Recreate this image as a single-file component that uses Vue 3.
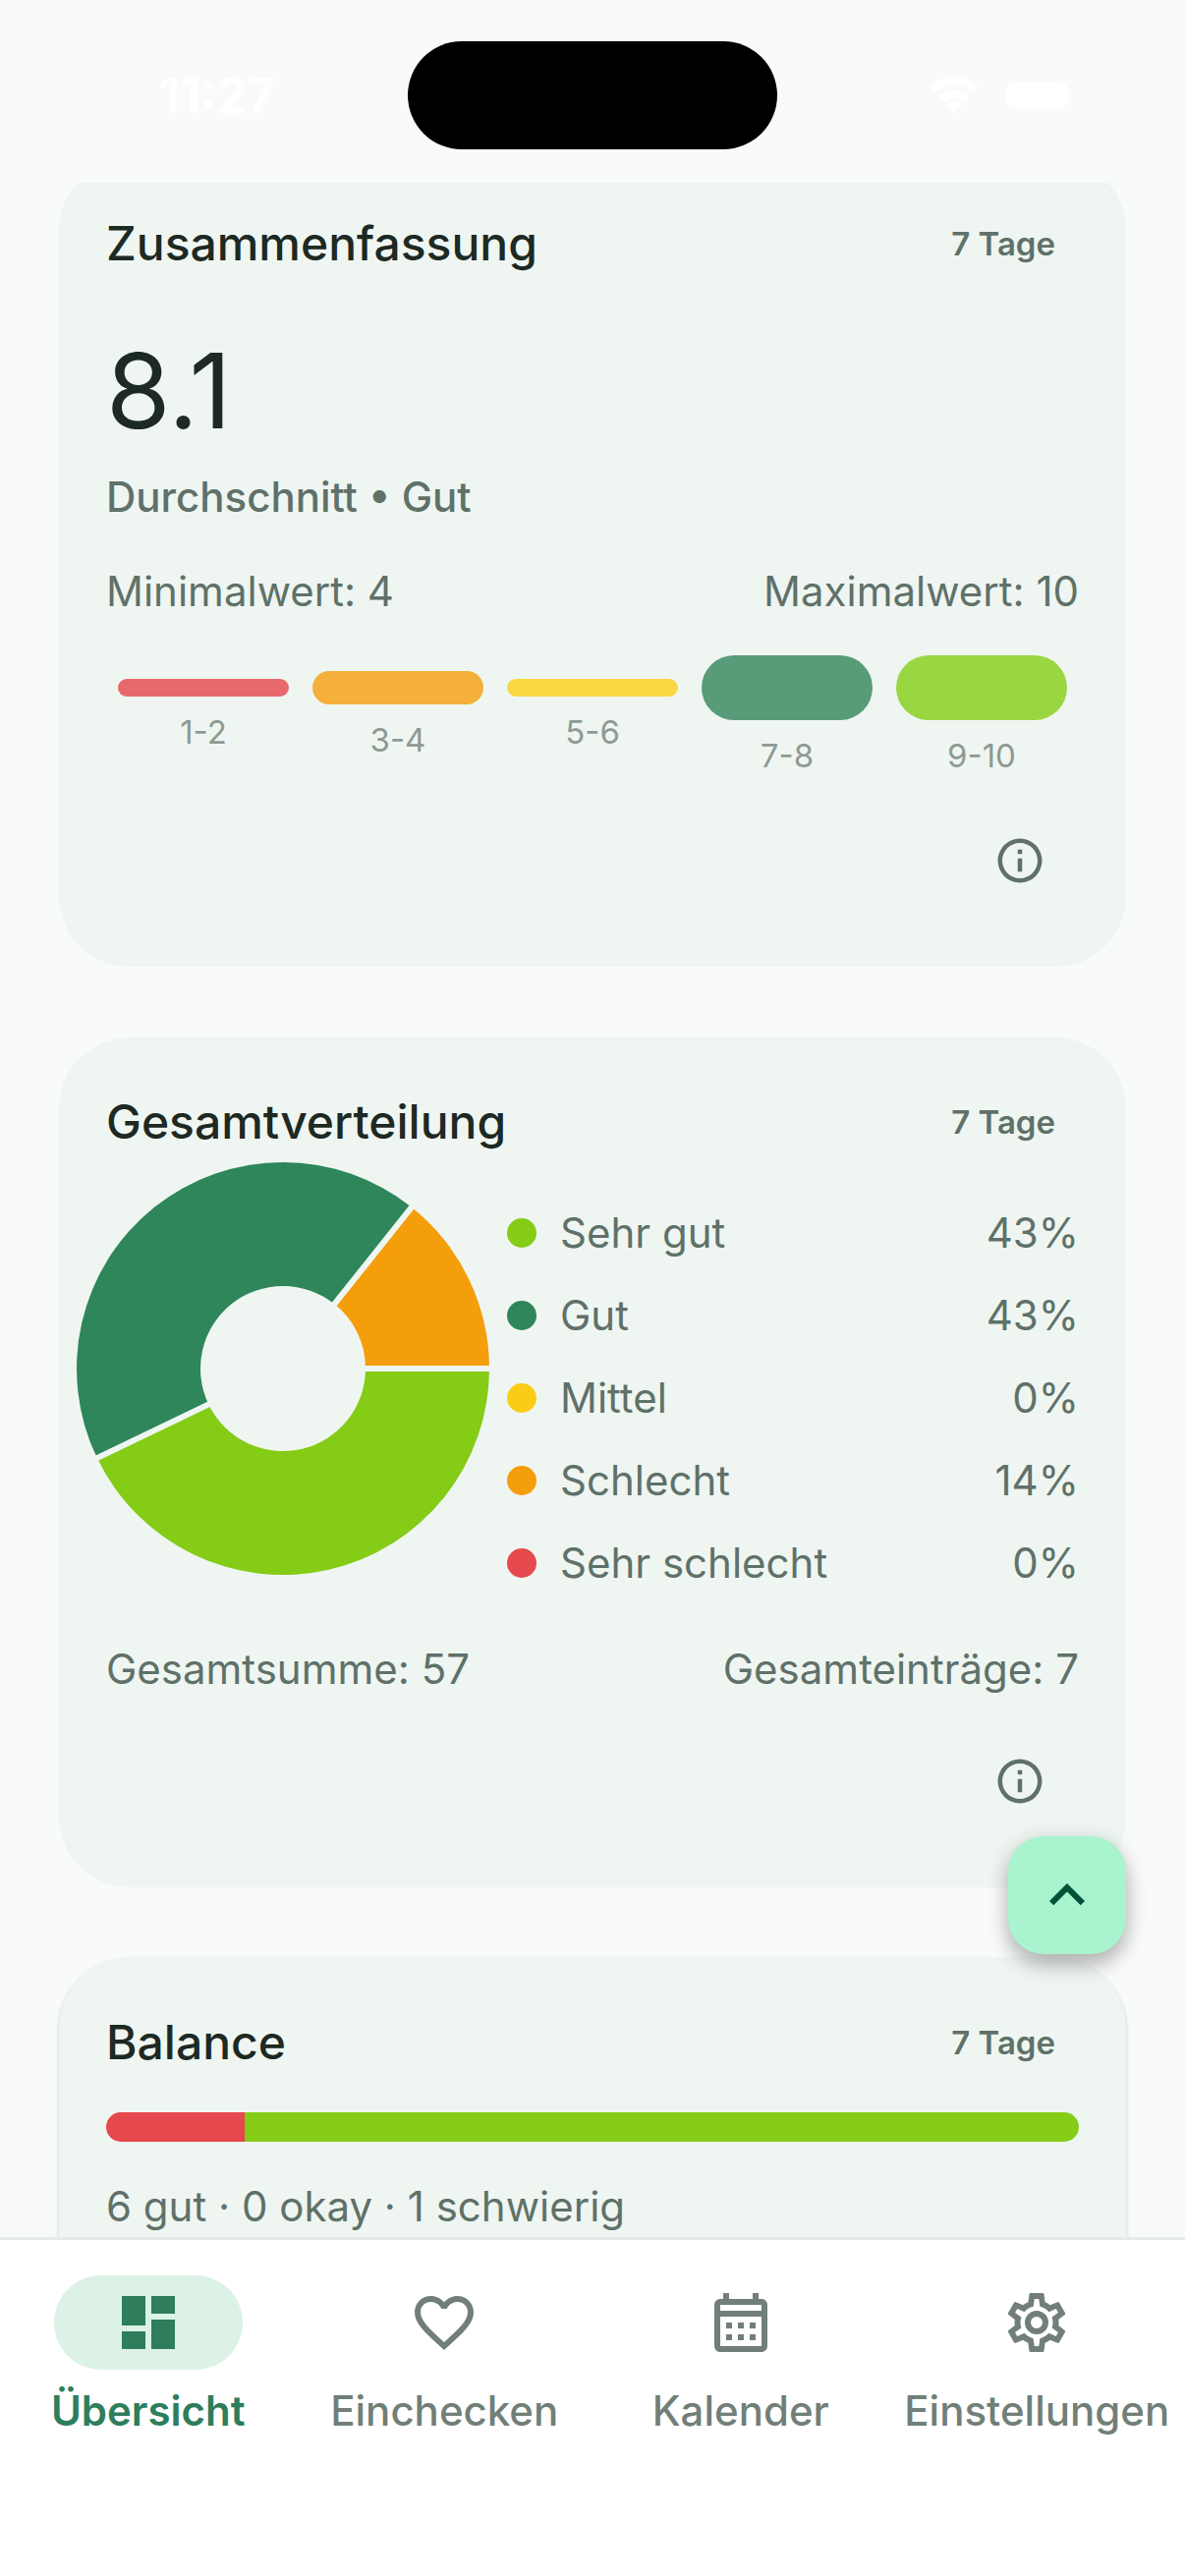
<script setup>
const RANGE_MAX = 66

const ranges = [
  { label: '1-2', height: 18, color: '#e8696c' },
  { label: '3-4', height: 34, color: '#f4b03a' },
  { label: '5-6', height: 18, color: '#fad643' },
  { label: '7-8', height: 66, color: '#579b79' },
  { label: '9-10', height: 66, color: '#9ad642' },
]

const moods = [
  { label: 'Sehr gut', count: 3, percent: '43%', color: '#84cc16' },
  { label: 'Gut', count: 3, percent: '43%', color: '#2e865a' },
  { label: 'Mittel', count: 0, percent: '0%', color: '#facc15' },
  { label: 'Schlecht', count: 1, percent: '14%', color: '#f59e0b' },
  { label: 'Sehr schlecht', count: 0, percent: '0%', color: '#e5484d' },
]

const OUTER = 210
const INNER = 84

function point(radius, angle) {
  return `${(radius * Math.cos(angle)).toFixed(2)} ${(radius * Math.sin(angle)).toFixed(2)}`
}

const total = moods.reduce((sum, mood) => sum + mood.count, 0)
let cursor = 0
const slices = moods
  .filter((mood) => mood.count > 0)
  .map((mood) => {
    const start = cursor
    const end = start + (mood.count / total) * Math.PI * 2
    cursor = end
    const large = end - start > Math.PI ? 1 : 0
    return {
      color: mood.color,
      path:
        `M${point(OUTER, start)} A${OUTER} ${OUTER} 0 ${large} 1 ${point(OUTER, end)} ` +
        `L${point(INNER, end)} A${INNER} ${INNER} 0 ${large} 0 ${point(INNER, start)} Z`,
      edge: `M${point(INNER - 3, start)} L${point(OUTER + 3, start)}`,
    }
  })

const balance = [
  { color: '#e5484d', share: 1 },
  { color: '#84cc16', share: 6 },
]

const infoIcon =
  'M11,9H13V7H11M12,20C7.59,20 4,16.41 4,12C4,7.59 7.59,4 12,4C16.41,4 20,7.59 20,12C20,16.41 16.41,20 12,20M12,2A10,10 0 0,0 2,12A10,10 0 0,0 12,22A10,10 0 0,0 22,12A10,10 0 0,0 12,2M11,17H13V11H11V17Z'

const tabs = [
  {
    label: 'Übersicht',
    active: true,
    icon: 'M13,3V9H21V3M13,21H21V11H13M3,21H11V15H3M3,13H11V3H3V13Z',
  },
  {
    label: 'Einchecken',
    icon: 'M12.1,18.55L12,18.65L11.89,18.55C7.14,14.24 4,11.39 4,8.5C4,6.5 5.5,5 7.5,5C9.04,5 10.54,6 11.07,7.36H12.93C13.46,6 14.96,5 16.5,5C18.5,5 20,6.5 20,8.5C20,11.39 16.86,14.24 12.1,18.55M16.5,3C14.76,3 13.09,3.81 12,5.08C10.91,3.81 9.24,3 7.5,3C4.42,3 2,5.41 2,8.5C2,12.27 5.4,15.36 10.55,20.03L12,21.35L13.45,20.03C18.6,15.36 22,12.27 22,8.5C22,5.41 19.58,3 16.5,3Z',
  },
  {
    label: 'Kalender',
    icon: 'M7 12H9V14H7V12M21 6V20C21 21.11 20.11 22 19 22H5C3.89 22 3 21.1 3 20V6C3 4.9 3.9 4 5 4H6V2H8V4H16V2H18V4H19C20.11 4 21 4.9 21 6M5 8H19V6H5V8M19 20V10H5V20H19M15 14V12H17V14H15M11 14V12H13V14H11M7 16H9V18H7V16M15 18V16H17V18H15M11 18V16H13V18H11Z',
  },
  {
    label: 'Einstellungen',
    icon: 'M12,8A4,4 0 0,1 16,12A4,4 0 0,1 12,16A4,4 0 0,1 8,12A4,4 0 0,1 12,8M12,10A2,2 0 0,0 10,12A2,2 0 0,0 12,14A2,2 0 0,0 14,12A2,2 0 0,0 12,10M10,22C9.75,22 9.54,21.82 9.5,21.58L9.13,18.93C8.5,18.68 7.96,18.34 7.44,17.94L4.95,18.95C4.73,19.03 4.46,18.95 4.34,18.73L2.34,15.27C2.21,15.05 2.27,14.78 2.46,14.63L4.57,12.97L4.5,12L4.57,11L2.46,9.37C2.27,9.22 2.21,8.95 2.34,8.73L4.34,5.27C4.46,5.05 4.73,4.96 4.95,5.05L7.44,6.05C7.96,5.66 8.5,5.32 9.13,5.07L9.5,2.42C9.54,2.18 9.75,2 10,2H14C14.25,2 14.46,2.18 14.5,2.42L14.87,5.07C15.5,5.32 16.04,5.66 16.56,6.05L19.05,5.05C19.27,4.96 19.54,5.05 19.66,5.27L21.66,8.73C21.79,8.95 21.73,9.22 21.54,9.37L19.43,11L19.5,12L19.43,13L21.54,14.63C21.73,14.78 21.79,15.05 21.66,15.27L19.66,18.73C19.54,18.95 19.27,19.04 19.05,18.95L16.56,17.95C16.04,18.34 15.5,18.68 14.87,18.93L14.5,21.58C14.46,21.82 14.25,22 14,22H10M11.25,4L10.88,6.61C9.68,6.86 8.62,7.5 7.85,8.39L5.44,7.35L4.69,8.65L6.8,10.2C6.4,11.37 6.4,12.64 6.8,13.8L4.68,15.36L5.43,16.66L7.86,15.62C8.63,16.5 9.68,17.14 10.87,17.38L11.24,20H12.76L13.13,17.39C14.32,17.14 15.37,16.5 16.14,15.62L18.57,16.66L19.32,15.36L17.2,13.81C17.6,12.64 17.6,11.37 17.2,10.2L19.31,8.65L18.56,7.35L16.15,8.39C15.38,7.5 14.32,6.86 13.12,6.62L12.75,4H11.25Z',
  },
]
</script>

<template>
  <div class="screen">
    <header class="status">
      <span class="time">11:27</span>
      <span class="island"></span>
      <span class="signals">
        <svg class="wifi" viewBox="0 0 50 38" fill="none" stroke="#fff" stroke-width="8" aria-hidden="true">
          <path d="M3 13A31 31 0 0 1 47 13" />
          <path d="M12 23A19 19 0 0 1 38 23" />
          <path d="M17 29A11 11 0 0 1 33 29L25 38Z" fill="#fff" stroke="none" />
        </svg>
        <span class="battery"></span>
      </span>
    </header>

    <main class="content">
      <div class="cards">
        <section class="card">
          <div class="head">
            <h2>Zusammenfassung</h2>
            <button type="button" class="period">7 Tage</button>
          </div>
          <p class="score">8.1</p>
          <p class="caption">Durchschnitt • Gut</p>
          <div class="pair">
            <span>Minimalwert: 4</span>
            <span>Maximalwert: 10</span>
          </div>
          <div class="ranges">
            <div v-for="range in ranges" :key="range.label" class="range">
              <div
                class="range-bar"
                :style="{
                  height: range.height + 'px',
                  marginTop: (RANGE_MAX - range.height) / 2 + 'px',
                  background: range.color,
                }"
              ></div>
              <span class="range-label">{{ range.label }}</span>
            </div>
          </div>
          <button type="button" class="info" aria-label="Info">
            <svg viewBox="0 0 24 24" aria-hidden="true"><path :d="infoIcon" /></svg>
          </button>
        </section>

        <section class="card">
          <div class="head">
            <h2>Gesamtverteilung</h2>
            <button type="button" class="period">7 Tage</button>
          </div>
          <div class="distribution">
            <svg class="donut" viewBox="-180 -180 360 360" aria-hidden="true">
              <path v-for="slice in slices" :key="slice.path" :d="slice.path" :fill="slice.color" />
              <path v-for="slice in slices" :key="slice.edge" :d="slice.edge" class="edge" />
            </svg>
            <ul class="legend">
              <li v-for="mood in moods" :key="mood.label">
                <span class="dot" :style="{ background: mood.color }"></span>
                <span class="mood">{{ mood.label }}</span>
                <span>{{ mood.percent }}</span>
              </li>
            </ul>
          </div>
          <div class="pair totals">
            <span>Gesamtsumme: 57</span>
            <span>Gesamteinträge: 7</span>
          </div>
          <button type="button" class="info" aria-label="Info">
            <svg viewBox="0 0 24 24" aria-hidden="true"><path :d="infoIcon" /></svg>
          </button>
        </section>

        <section class="card raised">
          <div class="head">
            <h2>Balance</h2>
            <button type="button" class="period">7 Tage</button>
          </div>
          <div class="balance">
            <span
              v-for="part in balance"
              :key="part.color"
              :style="{ flexGrow: part.share, background: part.color }"
            ></span>
          </div>
          <p class="summary">6 gut · 0 okay · 1 schwierig</p>
          <button type="button" class="info" aria-label="Info">
            <svg viewBox="0 0 24 24" aria-hidden="true"><path :d="infoIcon" /></svg>
          </button>
        </section>
      </div>

      <button type="button" class="to-top" aria-label="Nach oben">
        <svg viewBox="0 0 24 24" aria-hidden="true">
          <path d="M12 8l-6 6 1.41 1.41L12 10.83l4.59 4.58L18 14z" />
        </svg>
      </button>
    </main>

    <nav class="tabs">
      <button
        v-for="tab in tabs"
        :key="tab.label"
        type="button"
        class="tab"
        :class="{ active: tab.active }"
      >
        <span class="pill">
          <svg viewBox="0 0 24 24" aria-hidden="true"><path :d="tab.icon" /></svg>
        </span>
        <span class="tab-label">{{ tab.label }}</span>
      </button>
    </nav>
  </div>
</template>

<style>
body {
  margin: 0;
  background: #f8fbf9;
}
</style>

<style scoped>
.screen {
  display: flex;
  flex-direction: column;
  height: 100vh;
  background: #f8fbf9;
  color: #5f7169;
  font-family: Inter, "Liberation Sans", sans-serif;
  font-size: 42px;
  line-height: 60px;
}

button {
  margin: 0;
  padding: 0;
  border: 0;
  background: none;
  color: inherit;
  font: inherit;
}

svg {
  display: block;
  fill: currentColor;
}

h2,
p,
ul {
  margin: 0;
  padding: 0;
}

.status {
  display: grid;
  grid-template-columns: 1fr auto 1fr;
  align-items: center;
  flex: none;
  padding: 42px 108px 34px;
  color: #fff;
}

.time {
  padding-left: 54px;
  font-size: 50px;
  font-weight: 600;
}

.island {
  width: 376px;
  height: 110px;
  border-radius: 55px;
  background: #000;
}

.signals {
  display: flex;
  align-items: center;
  justify-content: flex-end;
  gap: 28px;
}

.wifi {
  width: 50px;
  height: 38px;
  fill: none;
}

.battery {
  width: 64px;
  height: 27px;
  margin-right: 10px;
  border-radius: 10px;
  background: #fff;
}

.content {
  position: relative;
  flex: 1;
  min-height: 0;
  overflow: hidden;
}

.cards {
  display: flex;
  flex-direction: column;
  gap: 72px;
  margin-top: -24px;
  padding: 0 60px;
}

.card {
  display: flex;
  flex-direction: column;
  padding: 48px;
  border-radius: 72px;
  background: #eff6f2;
}

.raised {
  box-shadow: 0 2px 4px rgba(0, 0, 0, 0.2);
}

.head {
  display: flex;
  align-items: center;
  justify-content: space-between;
  height: 76px;
}

h2 {
  color: #1d2923;
  font-size: 48px;
  font-weight: 500;
}

.period {
  padding: 0 24px;
  font-size: 33px;
  font-weight: 600;
}

.score {
  margin-top: 46px;
  color: #1d2923;
  font-size: 106px;
  line-height: 132px;
}

.caption {
  margin-top: 12px;
  font-weight: 500;
}

.pair {
  display: flex;
  justify-content: space-between;
  margin-top: 36px;
}

.ranges {
  display: flex;
  align-items: flex-start;
  margin-top: 35px;
}

.range {
  display: flex;
  flex: 1;
  flex-direction: column;
  gap: 14px;
  padding: 0 12px;
  text-align: center;
}

.range-bar {
  border-radius: 33px;
}

.range-label {
  color: #8d9a94;
  font-size: 33px;
  line-height: 45px;
}

.info {
  display: grid;
  place-items: center;
  align-self: flex-end;
  width: 120px;
  height: 120px;
  margin-top: 24px;
}

.info svg {
  width: 54px;
  height: 54px;
}

.distribution {
  display: flex;
  align-items: flex-start;
  gap: 48px;
  margin-top: 33px;
}

.donut {
  flex: none;
  width: 360px;
  height: 360px;
  overflow: visible;
}

.edge {
  fill: none;
  stroke: #eff6f2;
  stroke-width: 6;
}

.legend {
  display: flex;
  flex: 1;
  flex-direction: column;
  gap: 24px;
  padding-top: 12px;
  list-style: none;
}

.legend li {
  display: flex;
  align-items: center;
}

.dot {
  width: 30px;
  height: 30px;
  margin-right: 24px;
  border-radius: 50%;
}

.mood {
  flex: 1;
}

.totals {
  margin-top: 48px;
}

.balance {
  display: flex;
  height: 30px;
  margin-top: 33px;
  overflow: hidden;
  border-radius: 15px;
}

.summary {
  margin-top: 36px;
}

.to-top {
  position: absolute;
  right: 60px;
  bottom: 288px;
  display: grid;
  place-items: center;
  width: 120px;
  height: 120px;
  border-radius: 36px;
  background: #a9f3cf;
  box-shadow: 0 12px 20px rgba(0, 0, 0, 0.22), 0 4px 24px rgba(0, 0, 0, 0.12);
  color: #005236;
}

.to-top svg {
  width: 72px;
  height: 72px;
}

.tabs {
  display: grid;
  grid-template-columns: repeat(4, 1fr);
  flex: none;
  padding: 36px 0 138px;
  border-top: 3px solid #e5ebe8;
  background: #fff;
  color: #717f78;
}

.tab {
  display: flex;
  flex-direction: column;
  align-items: center;
  gap: 12px;
  min-width: 0;
  font-weight: 500;
}

.pill {
  display: grid;
  place-items: center;
  width: 192px;
  height: 96px;
  border-radius: 48px;
}

.pill svg {
  width: 72px;
  height: 72px;
}

.active {
  color: #2e7d5b;
  font-weight: 600;
}

.active .pill {
  background: #dcf2e6;
}
</style>
